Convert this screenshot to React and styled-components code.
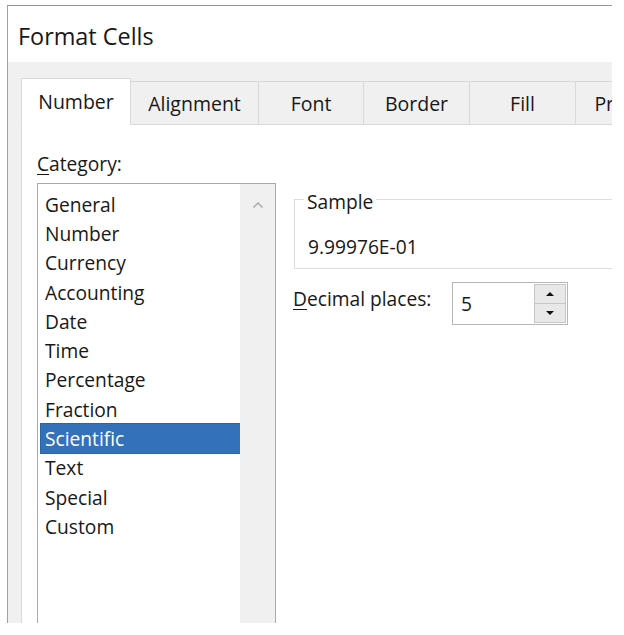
import React from "react";
import styled, { createGlobalStyle } from "styled-components";

const GlobalStyle = createGlobalStyle`
  html, body { margin: 0; padding: 0; background: #ffffff; }
  body { font-family: "Open Sans", "Noto Sans", sans-serif; color: #161616; }
`;

const Page = styled.div`
  padding: 5px 12px 0 7px;
  height: 635px;
  box-sizing: border-box;
`;

const Window = styled.div`
  width: 605px;
  height: 618px;
  box-sizing: border-box;
  border-top: 1px solid #6f9dd6;
  border-left: 1px solid #7fa6d8;
  background: #f0f0f0;
  overflow: hidden;
  display: flex;
  flex-direction: column;
`;

const TitleBar = styled.div`
  height: 56px;
  flex: none;
  box-sizing: border-box;
  background: #ffffff;
  display: flex;
  align-items: center;
  padding: 4px 0 0 10px;
  font-size: 23.4px;
  color: #181818;
`;

const Body = styled.div`
  flex: 1;
  padding: 17px 0 0 13px;
  display: flex;
  flex-direction: column;
  min-height: 0;
`;

const TabStrip = styled.div`
  display: flex;
  align-items: flex-end;
  height: 46px;
  flex: none;
  width: 720px;
`;

const Tab = styled.div`
  flex: none;
  width: ${(p) => p.$w}px;
  box-sizing: border-box;
  height: ${(p) => (p.$active ? 47 : 44)}px;
  display: flex;
  align-items: center;
  justify-content: center;
  font-size: 19.5px;
  color: #181818;
  background: ${(p) => (p.$active ? "#ffffff" : "#f0f0f0")};
  border-top: 1px solid #d9d9d9;
  border-right: 1px solid #d9d9d9;
  border-left: ${(p) => (p.$active ? "1px solid #d9d9d9" : "none")};
  border-bottom: ${(p) => (p.$active ? "1px solid #ffffff" : "1px solid #d9d9d9")};
  position: relative;
  z-index: ${(p) => (p.$active ? 1 : 0)};
`;

const TabPage = styled.div`
  flex: 1;
  width: 720px;
  background: #ffffff;
  border-left: 1px solid #d9d9d9;
  margin-top: -1px;
  padding: 26px 0 0 15px;
  display: flex;
  gap: 17px;
  min-height: 0;
`;

const LeftCol = styled.div`
  width: 239px;
  display: flex;
  flex-direction: column;
  flex: none;
`;

const Label = styled.div`
  font-size: 19.2px;
  line-height: 27px;
  color: #181818;
  white-space: nowrap;
`;

const Mnemonic = styled.u`
  text-decoration: underline;
  text-underline-offset: 3px;
  text-decoration-thickness: 1px;
`;

const ListBox = styled.div`
  margin-top: 6px;
  height: 460px;
  box-sizing: border-box;
  border: 1px solid #a9a9a9;
  display: flex;
  flex: none;
`;

const Items = styled.div`
  flex: 1;
  padding: 5.5px 0 0 3px;
  display: flex;
  flex-direction: column;
`;

const Item = styled.div`
  height: 29.3px;
  display: flex;
  align-items: center;
  padding-left: 4px;
  font-size: 19.2px;
  color: ${(p) => (p.$selected ? "#ffffff" : "#181818")};
  background: ${(p) => (p.$selected ? "#3371bb" : "transparent")};
  outline: ${(p) => (p.$selected ? "1px solid #2e63a6" : "none")};
`;

const ScrollTrack = styled.div`
  width: 35px;
  flex: none;
  background: #f0f0f0;
  display: flex;
  justify-content: center;
  padding-top: 17px;
  box-sizing: border-box;
`;

const RightCol = styled.div`
  flex: none;
  width: 340px;
  padding-top: 34px;
  display: flex;
  flex-direction: column;
`;

const Group = styled.fieldset`
  margin: 0 0 0 1px;
  border: 1px solid #dcdcdc;
  padding: 20px 12px 8px 13px;
  min-width: 0;
`;

const Legend = styled.legend`
  font-size: 19.2px;
  line-height: 24px;
  padding: 6px 3px 0 3px;
  margin-left: -4px;
  color: #181818;
`;

const SampleValue = styled.div`
  font-size: 19.2px;
  line-height: 26px;
  color: #181818;
`;

const SpinRow = styled.div`
  display: grid;
  grid-template-columns: 159px auto;
  margin-top: 13px;
  align-items: start;
`;

const SpinLabel = styled(Label)`
  margin-top: 3px;
`;

const SpinBox = styled.div`
  width: 116px;
  height: 43px;
  box-sizing: border-box;
  border: 1px solid #b6b6b6;
  display: flex;
  padding: 1px 1px 1px 0;
  background: #ffffff;
`;

const SpinValue = styled.div`
  flex: 1;
  display: flex;
  align-items: center;
  padding-left: 8px;
  font-size: 19.2px;
  color: #181818;
`;

const SpinButtons = styled.div`
  width: 32px;
  display: flex;
  flex-direction: column;
`;

const SpinButton = styled.div`
  flex: 1;
  box-sizing: border-box;
  border: 1px solid #c6c6c6;
  margin-top: ${(p) => (p.$down ? -1 : 0)}px;
  background: #e8e8e8;
  display: flex;
  align-items: center;
  justify-content: center;
`;

const tabs = [
  ["Number", 110],
  ["Alignment", 128],
  ["Font", 105],
  ["Border", 106],
  ["Fill", 106],
  ["Protection", 132],
];

const categories = [
  "General",
  "Number",
  "Currency",
  "Accounting",
  "Date",
  "Time",
  "Percentage",
  "Fraction",
  "Scientific",
  "Text",
  "Special",
  "Custom",
];

const Triangle = ({ down }) => (
  <svg width="10" height="6" viewBox="0 0 10 6">
    <path d={down ? "M1 1 L9 1 L5 5 Z" : "M1 5 L9 5 L5 1 Z"} fill="#111" />
  </svg>
);

export default function App() {
  return (
    <>
      <GlobalStyle />
      <Page>
        <Window>
          <TitleBar>Format Cells</TitleBar>
          <Body>
            <TabStrip>
              {tabs.map(([name, w], i) => (
                <Tab key={name} $w={w} $active={i === 0}>
                  {name}
                </Tab>
              ))}
            </TabStrip>
            <TabPage>
              <LeftCol>
                <Label>
                  <Mnemonic>C</Mnemonic>ategory:
                </Label>
                <ListBox>
                  <Items>
                    {categories.map((c) => (
                      <Item key={c} $selected={c === "Scientific"}>
                        {c}
                      </Item>
                    ))}
                  </Items>
                  <ScrollTrack>
                    <svg width="12" height="8" viewBox="0 0 12 8">
                      <path d="M1.5 6.5 L6 2 L10.5 6.5" fill="none" stroke="#a6a6a6" strokeWidth="1.4" />
                    </svg>
                  </ScrollTrack>
                </ListBox>
              </LeftCol>
              <RightCol>
                <Group>
                  <Legend>Sample</Legend>
                  <SampleValue>9.99976E-01</SampleValue>
                </Group>
                <SpinRow>
                  <SpinLabel>
                    <Mnemonic>D</Mnemonic>ecimal places:
                  </SpinLabel>
                  <SpinBox>
                    <SpinValue>5</SpinValue>
                    <SpinButtons>
                      <SpinButton>
                        <Triangle />
                      </SpinButton>
                      <SpinButton $down>
                        <Triangle down />
                      </SpinButton>
                    </SpinButtons>
                  </SpinBox>
                </SpinRow>
              </RightCol>
            </TabPage>
          </Body>
        </Window>
      </Page>
    </>
  );
}
